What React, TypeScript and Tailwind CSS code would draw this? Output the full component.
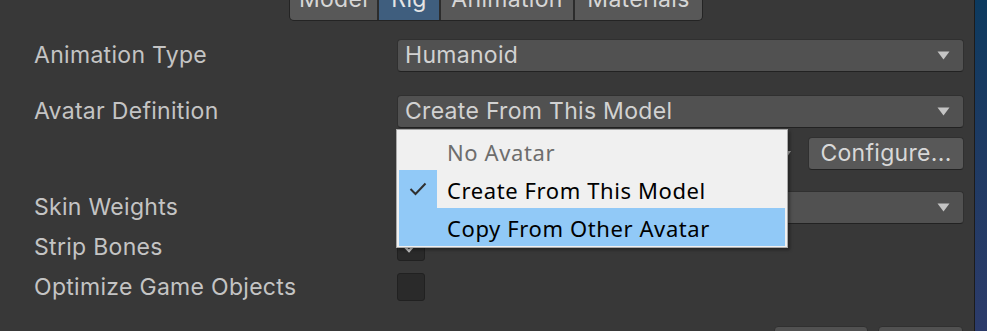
import React from "react";

const Arrow = () => (
  <svg width="13" height="9" viewBox="0 0 13 9" className="shrink-0">
    <path d="M0.5 0.5 L12.5 0.5 L6.5 8.5 Z" fill="#c4c4c4" />
  </svg>
);

const Dropdown = ({ value }: { value?: string }) => (
  <div className="flex h-[33px] flex-1 items-center justify-between rounded-[4px] border border-[#303030] border-b-[#222222] bg-[#515151] pl-[7px] pr-[13px] text-[23px] tracking-[0.3px] text-[#d2d2d2]">
    <span className="leading-none">{value}</span>
    <Arrow />
  </div>
);

const Label = ({ children }: { children: React.ReactNode }) => (
  <div className="w-[363px] shrink-0 text-[23px] leading-none tracking-[0.3px] text-[#c4c4c4]">{children}</div>
);

const Checkbox = ({ checked }: { checked?: boolean }) => (
  <div className="flex h-[28px] w-[28px] items-center justify-center rounded-[3px] border border-[#212121] bg-[#2a2a2a]">
    {checked && (
      <svg width="16" height="14" viewBox="0 0 16 14">
        <path d="M2 7 L6 11 L14 2" stroke="#c4c4c4" strokeWidth="2.4" fill="none" />
      </svg>
    )}
  </div>
);

const tabs = [
  { name: "Model", w: "w-[87px]", active: false },
  { name: "Rig", w: "w-[60px]", active: true },
  { name: "Animation", w: "w-[132px]", active: false },
  { name: "Materials", w: "w-[127px]", active: false },
];

export default function App() {
  return (
    <div className="flex h-[331px] w-[987px] overflow-hidden bg-[#383838] font-['Inter',sans-serif]">
      <div className="relative flex w-[974px] shrink-0 flex-col">
        {/* tabs */}
        <div className="flex h-[21px] shrink-0 pl-[289px]">
          <div className="flex gap-[2px] overflow-hidden rounded-b-[5px] border border-t-0 border-[#242424] bg-[#2c2c2c]">
            {tabs.map((t) => (
              <div
                key={t.name}
                className={`${t.w} flex justify-center overflow-hidden ${
                  t.active ? "bg-[#3f5e7e] text-[#e4e4e4]" : "bg-[#585858] text-[#d6d6d6]"
                }`}
              >
                <span className="-mt-[11px] whitespace-nowrap text-[23px] leading-[20px] tracking-[0.3px]">{t.name}</span>
              </div>
            ))}
          </div>
        </div>

        <div className="flex flex-col pl-[34px] pr-[10px]">
          <div className="mt-[18px] flex h-[33px] items-center">
            <Label>Animation Type</Label>
            <Dropdown value="Humanoid" />
          </div>
          <div className="mt-[23px] flex h-[33px] items-center">
            <Label>Avatar Definition</Label>
            <Dropdown value="Create From This Model" />
          </div>
          <div className="mt-[9px] flex h-[33px] items-center">
            <div className="w-[363px] shrink-0" />
            <div className="flex h-[33px] w-[396px] items-center justify-end pr-[2px]">
              <svg width="8" height="6" viewBox="0 0 8 6">
                <path d="M0 0 L8 0 L4 6 Z" fill="#a8a8a8" />
              </svg>
            </div>
            <div className="ml-auto flex h-[33px] w-[156px] items-center justify-center rounded-[4px] border border-[#303030] border-b-[#222222] bg-[#585858] text-[23px] tracking-[0.3px] text-[#d8d8d8]">
              Configure...
            </div>
          </div>
          <div className="mt-[21px] flex h-[33px] items-center">
            <Label>Skin Weights</Label>
            <Dropdown />
          </div>
          <div className="mt-[9px] flex h-[28px] items-center">
            <Label>Strip Bones</Label>
            <Checkbox checked />
          </div>
          <div className="mt-[12px] flex h-[28px] items-center">
            <Label>Optimize Game Objects</Label>
            <Checkbox />
          </div>
          <div className="mt-[25px] flex justify-end gap-[10px] pr-[1px]">
            <div className="h-[30px] w-[94px] rounded-[4px] border border-[#303030] bg-[#515151]" />
            <div className="h-[30px] w-[85px] rounded-[4px] border border-[#303030] bg-[#515151]" />
          </div>
        </div>

        {/* popup menu */}
        <div className="absolute left-[396px] top-[129px] flex w-[392px] flex-col border border-[#a9a9a9] bg-[#f0f0f0] px-[2px] pb-[1px] pt-[2px] font-['Noto_Sans',sans-serif] text-[22px] tracking-[0.6px] shadow-[2px_2px_3px_rgba(0,0,0,0.35)]">
          <div className="flex h-[38px] items-center">
            <div className="w-[38px] shrink-0" />
            <span className="pl-[10px] pt-[3px] text-[#6d6d6d]">No Avatar</span>
          </div>
          <div className="flex h-[38px] items-center">
            <div className="flex h-full w-[38px] shrink-0 items-center justify-center bg-[#91c9f7]">
              <svg width="18" height="14" viewBox="0 0 18 14">
                <path d="M1.5 7 L6.5 12 L16.5 1.5" stroke="#303030" strokeWidth="2" fill="none" />
              </svg>
            </div>
            <span className="pl-[10px] pt-[3px] text-black">Create From This Model</span>
          </div>
          <div className="flex h-[38px] items-center bg-[#91c9f7]">
            <div className="w-[38px] shrink-0" />
            <span className="pl-[10px] pt-[3px] text-black">Copy From Other Avatar</span>
          </div>
        </div>
      </div>
      <div className="w-[1px] shrink-0 bg-[#1c1c1c]" />
      <div className="flex-1 bg-linear-to-b from-[#0c3a5f] via-[#1f3a63] to-[#2c3b6a]" />
    </div>
  );
}
